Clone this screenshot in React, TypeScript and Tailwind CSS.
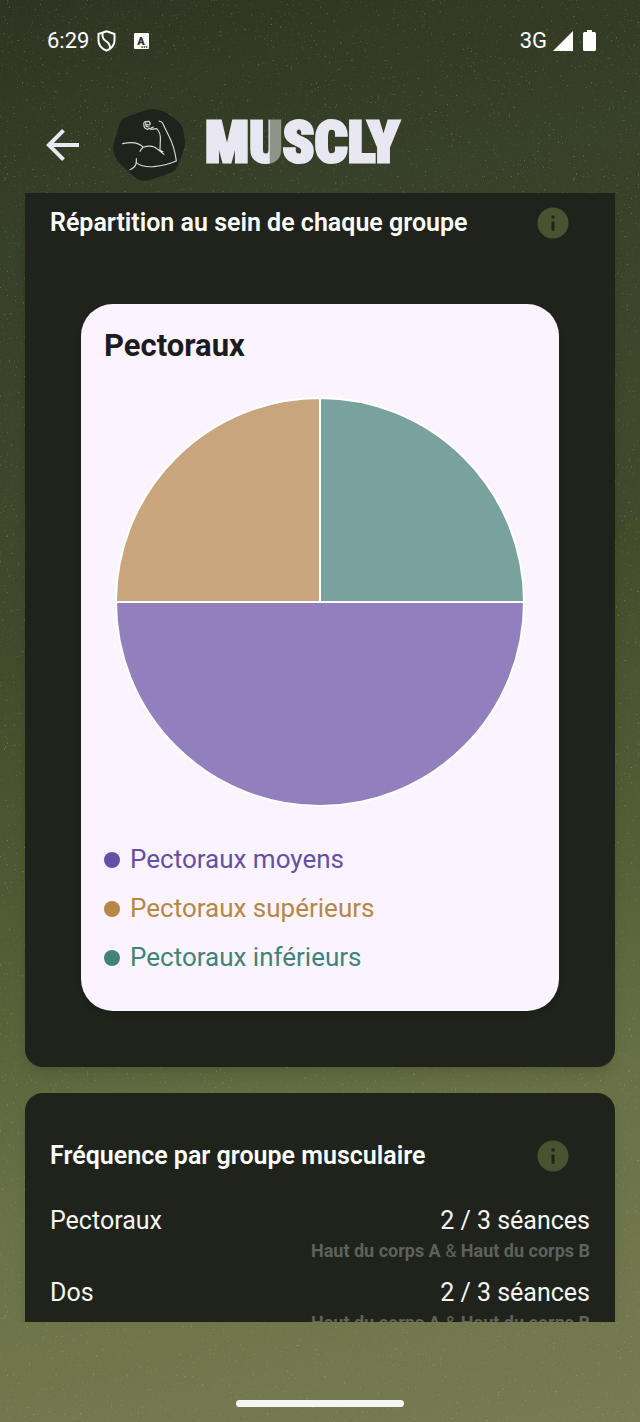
interface MuscleShare {
  name: string;
  value: number;
  fill: string;
  dot: string;
  text: string;
}

interface FrequencyRow {
  group: string;
  sessions: string;
  days: string[];
}

const shares: MuscleShare[] = [
  { name: "Pectoraux moyens", value: 50, fill: "#9280be", dot: "bg-[#674fa5]", text: "text-[#674fa5]" },
  { name: "Pectoraux supérieurs", value: 25, fill: "#c8a57c", dot: "bg-[#b68845]", text: "text-[#b68845]" },
  { name: "Pectoraux inférieurs", value: 25, fill: "#79a19e", dot: "bg-[#418377]", text: "text-[#418377]" },
];

const frequencies: FrequencyRow[] = [
  { group: "Pectoraux", sessions: "2 / 3 séances", days: ["Haut du corps A", "Haut du corps B"] },
  { group: "Dos", sessions: "2 / 3 séances", days: ["Haut du corps A", "Haut du corps B"] },
];

// Grainy speckles over the green gradient
const Grain = () => (
  <svg className="pointer-events-none absolute inset-0 h-full w-full" aria-hidden="true">
    <filter id="light-grain" x="0" y="0" width="100%" height="100%">
      <feTurbulence type="fractalNoise" baseFrequency="0.45" numOctaves="2" seed="4" />
      <feColorMatrix values="0 0 0 0 0.55  0 0 0 0 0.62  0 0 0 0 0.4  9 0 0 0 -6.4" />
    </filter>
    <filter id="dark-grain" x="0" y="0" width="100%" height="100%">
      <feTurbulence type="fractalNoise" baseFrequency="0.5" numOctaves="2" seed="11" />
      <feColorMatrix values="0 0 0 0 0.1  0 0 0 0 0.14  0 0 0 0 0.07  0 7 0 0 -4.6" />
    </filter>
    <rect width="100%" height="100%" filter="url(#light-grain)" opacity="0.25" />
    <rect width="100%" height="100%" filter="url(#dark-grain)" opacity="0.25" />
  </svg>
);

const StatusBar = () => (
  <div className="flex h-[81px] shrink-0 items-center justify-between pr-11 pl-[47px] text-[22px] text-white">
    <div className="flex items-center">
      <span>6:29</span>
      <svg className="ml-2 h-[22px] w-[19px]" viewBox="0 0 19 22" fill="none" stroke="currentColor">
        <path d="M9.5 1.3 17.5 4v6.5c0 4.5-3 8-8 10.2-5-2.2-8-5.700-8-10.200V4z" strokeWidth="2" />
        <path d="M5.500 3c-.5 5 1 6.500 4 8.500 2.500 1.700 3.800 3 3.500 7" strokeWidth="2" />
      </svg>
      <svg className="ml-[18px] h-4 w-[15px]" viewBox="0 0 15 16">
        <rect width="15" height="16" rx="1" fill="#fff" />
        <text x="7" y="11.500" fontSize="11" fontWeight="900" textAnchor="middle" fill="#2c3220">
          A
        </text>
        <path d="M7.500 14h1.400m.8 0h1.400m.8 0h1.400" stroke="#2c3220" strokeWidth="1.300" />
      </svg>
    </div>
    <div className="flex items-center">
      <span>3G</span>
      <svg className="ml-1.5 h-5 w-5" viewBox="0 0 20 20" fill="currentColor">
        <path d="M20 0v20H0z" />
      </svg>
      <svg className="ml-2.5 h-[21px] w-[13px]" viewBox="0 0 13 21" fill="currentColor">
        <path d="M4 0h5v2h2.500Q13 2 13 3.500v16q0 1.500-1.500 1.500h-10Q0 21 0 19.500v-16Q0 2 1.500 2H4z" />
      </svg>
    </div>
  </div>
);

const ArmLogo = () => (
  <svg className="size-[72px]" viewBox="0 0 216 216" fill="none" aria-hidden="true">
    <path
      d="M104 2C128-2 146 2 162 13L190 33C206 45 210 57 212 73L216 96C217 112 213 120 208 134L197 163C191 183 182 190 164 195L116 211C96 217 80 217 64 204L26 168C8 154 3 142 2 124C-1 112 2 106 6 90L18 52C24 32 32 25 50 20Z"
      fill="#20231c"
    />
    <g stroke="#d9dad6" strokeWidth="3.500" strokeLinecap="round" strokeLinejoin="round">
      <path d="M138 36Q150 38 153 52L168 82Q184 112 190 156Q164 168 122 173Q86 175 69 161" />
      <path d="M70 149L70 162Q66 176 51 182" />
      <path d="M29 104Q72 94 91 115Q84 120 81 127M91 115Q108 108 124 114Q136 121 153 136M141 124L150 128" />
      <path d="M131 59Q144 70 142 96L141 123" />
      <path d="M131 59L115 61Q108 57 103 61Q92 57 93 49Q90 40 98 38L108 37Q114 42 110 48L101 47M98 42L99 52L108 54M113 58L121 54" />
    </g>
  </svg>
);

const Header = () => (
  <header className="flex shrink-0 items-center pt-7 pb-3 pl-[46px]">
    <button type="button" aria-label="Retour" className="text-[#e8e7f2]">
      <svg className="h-8 w-[34px]" viewBox="0 0 34 32" fill="none" stroke="currentColor" strokeWidth="4">
        <path d="M33 16H3M17.500 1.400 2.900 16l14.600 14.600" />
      </svg>
    </button>
    <div className="ml-[33px]">
      <ArmLogo />
    </div>
    <h1 className="ml-5 pb-1.5 font-['Roboto_Condensed','DejaVu_Sans_Mono',monospace] text-[58px] leading-none font-black text-[#e8e7f2] [-webkit-text-stroke:3px_#e8e7f2]">
      M
      <span className="bg-[linear-gradient(90deg,#e8e7f2_60%,#8f938a_61%)] bg-clip-text text-transparent [-webkit-text-stroke:3px_transparent]">
        U
      </span>
      SCLY
    </h1>
  </header>
);

const InfoButton = ({ label }: { label: string }) => (
  <button type="button" aria-label={label} className="flex w-[74px] justify-center">
    <svg className="size-8" viewBox="0 0 32 32">
      <circle cx="16" cy="16" r="15.500" fill="#4a5330" />
      <path d="M14.500 8.500h3v3h-3zm0 6h3v9.200h-3z" fill="#20231c" />
    </svg>
  </button>
);

const PieChart = ({ data }: { data: MuscleShare[] }) => {
  const total = data.reduce((sum, item) => sum + item.value, 0);
  const point = (angle: number) => `${205 + 204 * Math.cos(angle)} ${205 + 204 * Math.sin(angle)}`;
  let angle = 0;

  return (
    <svg className="w-full" viewBox="0 0 410 410" role="img" aria-label="Répartition des pectoraux">
      {data.map((item) => {
        const start = angle;
        angle += (item.value / total) * Math.PI * 2;
        return (
          <path
            key={item.name}
            d={`M205 205L${point(start)}A204 204 0 0 1 ${point(angle)}Z`}
            fill={item.fill}
            stroke="#fff"
            strokeWidth="2"
          />
        );
      })}
    </svg>
  );
};

const App = () => {
  return (
    <div className="relative h-screen bg-[linear-gradient(168deg,#2f3422_0%,#374028_16%,#414b2b_42%,#535e36_62%,#6a7146_78%,#70764a_88%,#787b53_100%)] font-[Roboto,sans-serif]">
      <Grain />
      <div className="relative flex h-full flex-col">
        <StatusBar />
        <Header />

        <main className="flex min-h-0 flex-1 flex-col gap-[26px] overflow-y-auto px-[25px] [scrollbar-width:none]">
          <section className="shrink-0 rounded-b-[18px] bg-[#20231c] px-[25px] pb-14 shadow-lg">
            <div className="flex h-[60px] items-center justify-between">
              <h2 className="text-[25px] font-semibold text-white">Répartition au sein de chaque groupe</h2>
              <InfoButton label="Informations sur la répartition" />
            </div>

            <div className="mx-[31px] mt-[51px] rounded-[32px] bg-[#fbf4ff] px-[23px] pt-6 pb-[29px] shadow-md">
              <h3 className="text-[31px] leading-9 font-bold text-[#1c1b1f]">Pectoraux</h3>
              <div className="mx-[11px] mt-[33px]">
                <PieChart data={shares} />
              </div>
              <ul className="mt-7">
                {shares.map((item) => (
                  <li key={item.name} className={`flex h-[49px] items-center gap-2.5 text-[26px] ${item.text}`}>
                    <span className={`size-4 rounded-full ${item.dot}`} />
                    {item.name}
                  </li>
                ))}
              </ul>
            </div>
          </section>

          <section className="shrink-0 rounded-[18px] bg-[#20231c] p-[25px] shadow-lg">
            <div className="flex h-[75px] items-center justify-between">
              <h2 className="text-[25px] font-semibold text-white">Fréquence par groupe musculaire</h2>
              <InfoButton label="Informations sur la fréquence" />
            </div>
            <dl className="mt-2.5 flex flex-col gap-3">
              {frequencies.map((row) => (
                <div key={row.group} className="flex justify-between text-[25px] leading-9 text-[#f5f5f3]">
                  <dt>{row.group}</dt>
                  <dd className="text-right">
                    <p>{row.sessions}</p>
                    <p className="text-[18px] leading-6 text-[#5f615d]">
                      <span className="font-bold">{row.days[0]}</span> &amp;{" "}
                      <span className="font-bold">{row.days[1]}</span>
                    </p>
                  </dd>
                </div>
              ))}
            </dl>
          </section>
        </main>

        <footer className="flex h-[100px] shrink-0 items-end justify-center pb-[15px]">
          <div className="h-[7px] w-[168px] rounded-full bg-[#f4f4f1]" />
        </footer>
      </div>
    </div>
  );
};

export default App;
